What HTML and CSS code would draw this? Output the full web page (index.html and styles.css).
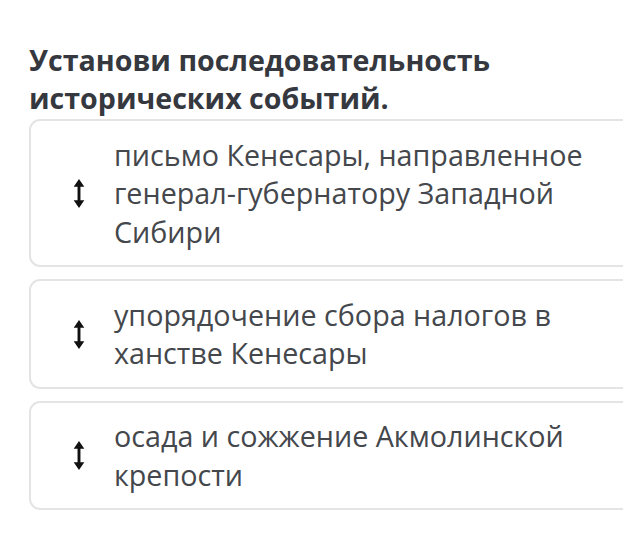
FILE: index.html
```html
<!DOCTYPE html>
<html lang="ru">
	<head>
		<meta charset="UTF-8" />
		<meta name="viewport" content="width=device-width, initial-scale=1.0" />
		<title>Установи последовательность</title>
		<link rel="stylesheet" href="styles.css">
	</head>
	<body>
		<div class="question">
			<h2 class="question-title">Установи последовательность исторических событий.</h2>

			<div class="order-list">
				<div class="order-item">
					<svg class="drag-icon" viewBox="0 0 12 30" aria-hidden="true">
						<path d="M6 0 L11.5 8 H7.5 V22 H11.5 L6 30 L0.5 22 H4.5 V8 H0.5 Z" />
					</svg>
					<div class="order-text">письмо Кенесары, направленное генерал-губернатору Западной Сибири</div>
				</div>

				<div class="order-item">
					<svg class="drag-icon" viewBox="0 0 12 30" aria-hidden="true">
						<path d="M6 0 L11.5 8 H7.5 V22 H11.5 L6 30 L0.5 22 H4.5 V8 H0.5 Z" />
					</svg>
					<div class="order-text">упорядочение сбора налогов в ханстве Кенесары</div>
				</div>

				<div class="order-item">
					<svg class="drag-icon" viewBox="0 0 12 30" aria-hidden="true">
						<path d="M6 0 L11.5 8 H7.5 V22 H11.5 L6 30 L0.5 22 H4.5 V8 H0.5 Z" />
					</svg>
					<div class="order-text">осада и сожжение Акмолинской крепости</div>
				</div>
			</div>
		</div>
	</body>
</html>
```

FILE: styles.css
```css
html,
body {
	overflow: hidden;
}
body {
	margin: 0;
	font-family: "Open Sans", Arial, sans-serif;
	background-color: #fff;
}
.question {
	padding: 41px 0 0 29px;
}
.question-title {
	margin: 0 0 2px 0;
	width: 560px;
	font-size: 28.6px;
	line-height: 38px;
	font-weight: bold;
	color: #35383e;
}
.order-list {
	display: flex;
	flex-direction: column;
	gap: 12px;
	width: 640px;
}
.order-item {
	display: flex;
	align-items: center;
	padding: 14.5px 0 14px 42px;
	border: 2px solid #e4e4e4;
	border-radius: 11px;
}
.drag-icon {
	flex: none;
	width: 12px;
	height: 29px;
	margin-right: 29px;
	fill: #111;
}
.order-text {
	width: 490px;
	font-size: 28.7px;
	line-height: 38.5px;
	color: #44474c;
}
```
